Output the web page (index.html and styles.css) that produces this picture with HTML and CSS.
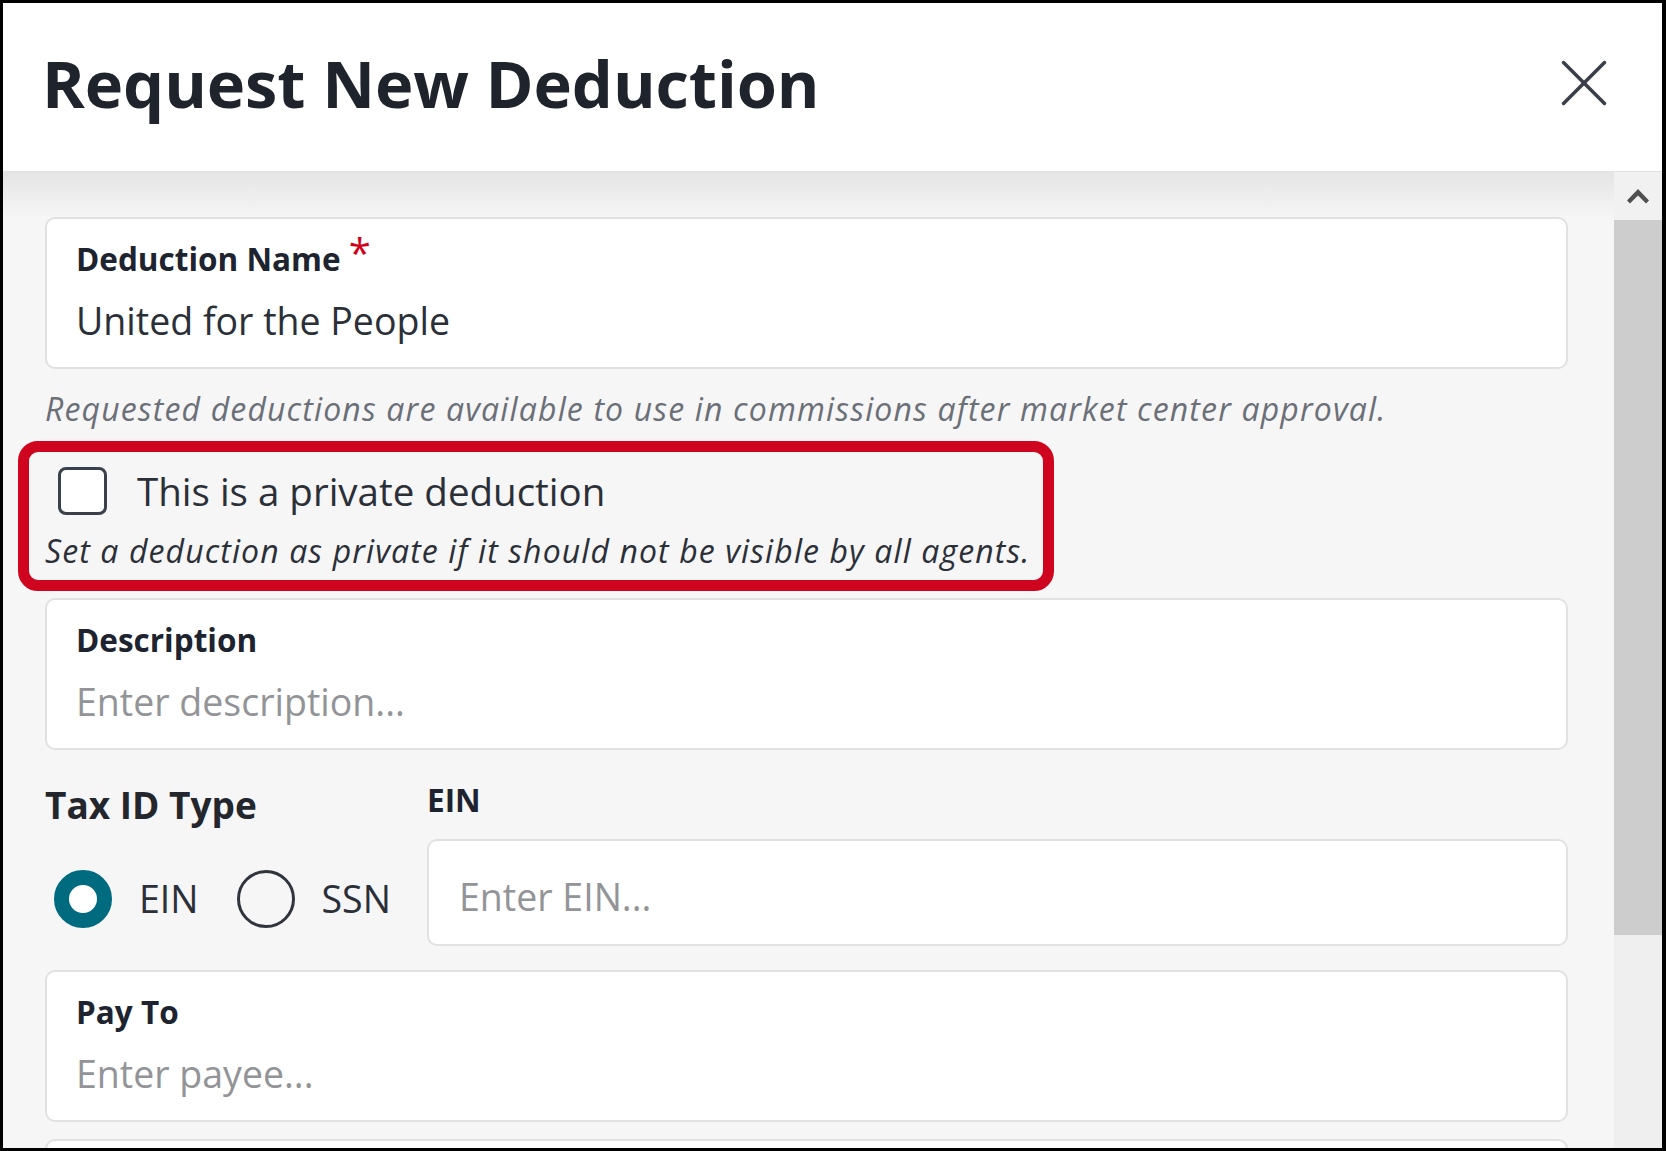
FILE: index.html
```html
<!DOCTYPE html>
<html lang="en">
<head>
<meta charset="utf-8">
<title>Request New Deduction</title>
<link rel="stylesheet" href="styles.css">
</head>
<body>
<div class="modal">
  <header class="modal-header">
    <h1 class="modal-title">Request New Deduction</h1>
    <button class="close-btn" type="button" aria-label="Close">
      <svg width="46" height="46" viewBox="0 0 46 46" aria-hidden="true">
        <line x1="2.5" y1="2.5" x2="43.5" y2="43.5" />
        <line x1="43.5" y1="2.5" x2="2.5" y2="43.5" />
      </svg>
    </button>
  </header>
  <div class="modal-body">
    <div class="content">
      <div class="field-card">
        <div class="field-label">Deduction Name<span class="req">*</span></div>
        <div class="field-value">United for the People</div>
      </div>
      <p class="hint">Requested deductions are available to use in commissions after market center approval.</p>
      <div class="private-box">
        <div class="check-row">
          <span class="checkbox"></span>
          <span class="check-text">This is a private deduction</span>
        </div>
        <p class="note">Set a deduction as private if it should not be visible by all agents.</p>
      </div>
      <div class="field-card card-desc">
        <div class="field-label">Description</div>
        <div class="field-value placeholder">Enter description...</div>
      </div>
      <div class="tax-row">
        <div class="tax-type">
          <div class="tax-title">Tax ID Type</div>
          <div class="radios">
            <span class="radio radio-on"></span><span class="radio-text radio-text-first">EIN</span>
            <span class="radio"></span><span class="radio-text">SSN</span>
          </div>
        </div>
        <div class="ein-field">
          <div class="field-label">EIN</div>
          <div class="ein-input"><span class="placeholder">Enter EIN...</span></div>
        </div>
      </div>
      <div class="field-card card-pay">
        <div class="field-label">Pay To</div>
        <div class="field-value placeholder">Enter payee...</div>
      </div>
      <div class="field-card card-next"></div>
    </div>
    <div class="scrollbar">
      <div class="sb-up">
        <svg width="22" height="16" viewBox="0 0 22 16" aria-hidden="true">
          <path d="M11 1 L22 12.5 L19 15.5 L11 7.5 L3 15.5 L0 12.5 Z" />
        </svg>
      </div>
      <div class="sb-thumb"></div>
      <div class="sb-track"></div>
    </div>
  </div>
</div>
</body>
</html>
```
FILE: styles.css
```css
* { box-sizing: border-box; }
html, body { margin: 0; padding: 0; }
body {
  font-family: "Open Sans", Lato, "Liberation Sans", sans-serif;
  color: #2b2f38;
  background: #fff;
}
.modal {
  width: 1666px;
  height: 1151px;
  border: 3px solid #000;
  border-right-width: 4px;
  display: flex;
  flex-direction: column;
  overflow: hidden;
  background: #fff;
}
.modal-header {
  height: 169px;
  flex: none;
  display: flex;
  justify-content: space-between;
  align-items: flex-start;
  padding: 40px 55px 0 39px;
  background: #fff;
  border-bottom: 1px solid #e2e2e2;
}
.modal-title {
  margin: 0;
  font-size: 65px;
  line-height: 80px;
  font-weight: 700;
  color: #1f232b;
  letter-spacing: -0.1px;
}
.close-btn {
  margin: 17px 0 0;
  padding: 0;
  border: 0;
  background: none;
  width: 46px;
  height: 46px;
}
.close-btn svg line {
  stroke: #3a3f4a;
  stroke-width: 3.5;
  stroke-linecap: round;
}
.modal-body {
  flex: 1;
  min-height: 0;
  display: flex;
}
.content {
  flex: 1;
  padding: 45px 46px 0 42px;
  background: linear-gradient(#e4e4e4, #f6f6f6) top / 100% 46px no-repeat, #f6f6f6;
  overflow: hidden;
}
.field-card {
  background: #fff;
  border: 2px solid #e1e1e1;
  border-radius: 10px;
  padding: 20px 29px 23px;
  display: flex;
  flex-direction: column;
  gap: 19px;
}
.field-label {
  font-size: 31.5px;
  line-height: 40px;
  font-weight: 700;
  color: #1e2330;
}
.req {
  color: #d0021b;
  font-size: 40px;
  font-weight: 400;
  line-height: 0;
  margin-left: 8px;
  vertical-align: 3px;
}
.field-value {
  font-size: 37.5px;
  line-height: 46px;
  color: #2b2f38;
}
.placeholder { color: #939498; }
.hint {
  margin: 21px 0 0;
  font-size: 32px;
  line-height: 38px;
  font-style: italic;
  letter-spacing: 1.15px;
  white-space: nowrap;
  color: #6b6f78;
}
.private-box {
  margin: 13px 0 0 -27px;
  width: 1036px;
  border: 11px solid #cf0520;
  border-radius: 20px;
  padding: 15px 10px 11px 16px;
}
.check-row {
  display: flex;
  align-items: center;
  gap: 30px;
  margin-left: 13px;
  height: 48px;
}
.checkbox {
  width: 49px;
  height: 48px;
  border: 3.5px solid #3b414c;
  border-radius: 8px;
  background: #fff;
  flex: none;
}
.check-text {
  font-size: 38.5px;
  line-height: 48px;
  color: #2b2f38;
}
.note {
  margin: 18px 0 0;
  font-size: 32px;
  line-height: 36px;
  font-style: italic;
  letter-spacing: 1.1px;
  white-space: nowrap;
  color: #2b2f38;
}
.card-desc { margin-top: 7px; }
.tax-row {
  margin-top: 30px;
  display: flex;
  align-items: flex-start;
}
.tax-type {
  width: 382px;
  flex: none;
}
.tax-title {
  font-size: 37px;
  line-height: 50px;
  font-weight: 700;
  color: #23262d;
}
.radios {
  margin: 40px 0 0 9px;
  height: 58px;
  display: flex;
  align-items: center;
}
.radio {
  width: 58px;
  height: 58px;
  border-radius: 50%;
  border: 3px solid #2f343d;
  flex: none;
}
.radio-on {
  border: 15.5px solid #006b7f;
  background: #fff;
}
.radio-text {
  font-size: 37.5px;
  line-height: 46px;
  color: #2b2f38;
  margin-left: 27px;
}
.radio-text-first { margin-right: 38px; }
.ein-field { flex: 1; }
.ein-input {
  margin-top: 19px;
  height: 107px;
  background: #fff;
  border: 2px solid #e1e1e1;
  border-radius: 10px;
  padding: 8px 0 0 30px;
  display: flex;
  align-items: center;
  font-size: 37.5px;
  line-height: 46px;
}
.card-pay { margin-top: 24px; }
.card-next { margin-top: 17px; height: 152px; }
.scrollbar {
  width: 48px;
  flex: none;
  display: flex;
  flex-direction: column;
  background: #efefef;
}
.sb-up {
  height: 48px;
  background: #f1f1f1;
  display: flex;
  align-items: center;
  justify-content: center;
}
.sb-up svg path { fill: #505050; }
.sb-thumb {
  height: 715px;
  background: #cdcdcd;
}
.sb-track { flex: 1; }
```
